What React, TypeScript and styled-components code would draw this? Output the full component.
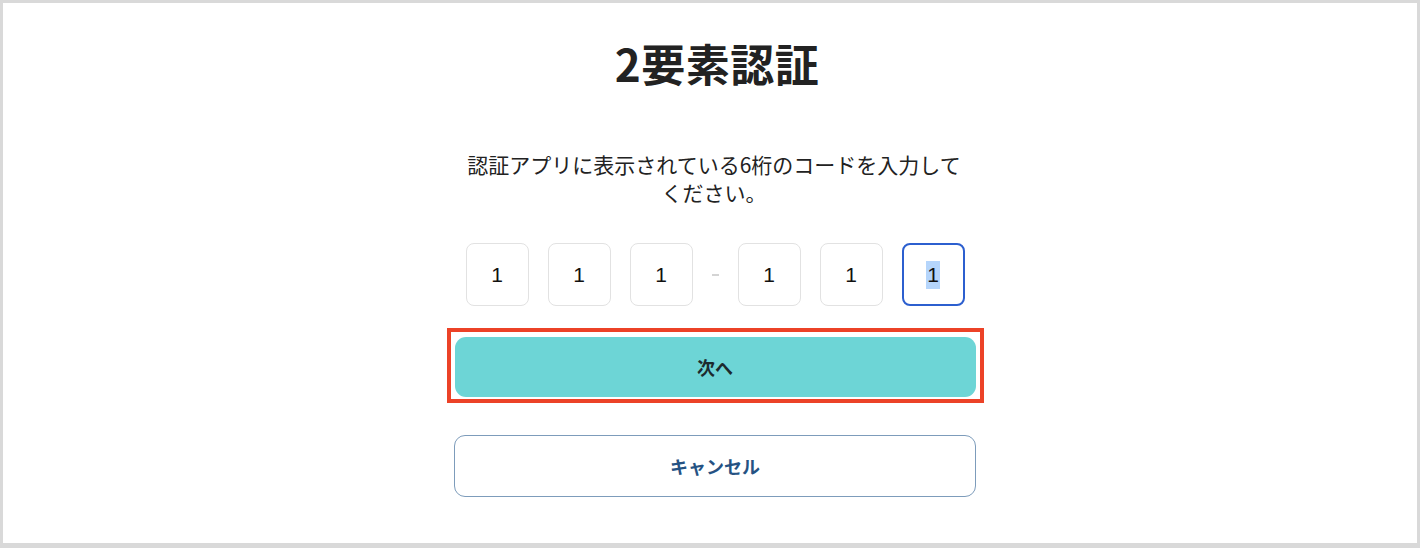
import React from "react";
import styled, { createGlobalStyle } from "styled-components";

const Global = createGlobalStyle`
  html, body { margin: 0; padding: 0; background: #ffffff; }
  body { font-family: "Noto Sans CJK JP", "Noto Sans", sans-serif; color: #222222; }
  * { box-sizing: border-box; }
`;

const Frame = styled.div`
  width: 1420px;
  height: 548px;
  border: 3px solid #d9d9d9;
  border-bottom-width: 5px;
  background: #ffffff;
  display: flex;
  justify-content: center;
  padding-left: 10px;
  overflow: hidden;
`;

const Column = styled.main`
  width: 522px;
  display: flex;
  flex-direction: column;
  align-items: center;
  padding-top: 30px;
`;

const Title = styled.h1`
  margin: 0;
  padding-left: 4px;
  font-size: 44px;
  line-height: 60px;
  font-weight: 700;
  color: #222222;
  letter-spacing: 0.5px;
`;

const Lead = styled.p`
  margin: 57px 0 0;
  width: 512px;
  padding-right: 2px;
  font-size: 21px;
  line-height: 28px;
  text-align: center;
  color: #222222;
`;

const CodeRow = styled.div`
  margin-top: 37px;
  display: flex;
  align-items: center;
  gap: 19px;
`;

const Group = styled.div`
  display: flex;
  gap: 19px;
`;

const Digit = styled.div<{ $active?: boolean }>`
  width: 63px;
  height: 63px;
  border-radius: 8px;
  border: ${(p) => (p.$active ? "2.5px solid #2c5fcf" : "1px solid #e2e2e2")};
  display: flex;
  align-items: center;
  justify-content: center;
  font-family: "Liberation Sans", Arial, sans-serif;
  font-size: 21px;
  color: #111111;
`;

const Selected = styled.span`
  background: #b5d5fb;
  padding: 2px 1px;
`;

const Dash = styled.span`
  width: 7px;
  height: 2px;
  background: #d4d4d4;
`;

const Highlight = styled.div`
  margin-top: 22px;
  width: 537px;
  border: 4.5px solid #ec4227;
  padding: 5px 4px 2px 4px;
`;

const PrimaryButton = styled.button`
  width: 521px;
  height: 60px;
  border: none;
  border-radius: 11px;
  background: #6dd5d6;
  font-family: "Noto Sans CJK JP", sans-serif;
  font-size: 18px;
  font-weight: 700;
  color: #1c2a2e;
  display: block;
`;

const SecondaryButton = styled.button`
  margin-top: 32px;
  width: 522px;
  height: 62px;
  border: 1px solid #7d9cbb;
  border-radius: 11px;
  background: #ffffff;
  font-family: "Noto Sans CJK JP", sans-serif;
  font-size: 18px;
  font-weight: 700;
  color: #255283;
`;

export default function App() {
  return (
    <>
      <Global />
      <Frame>
        <Column>
          <Title>2要素認証</Title>
          <Lead>認証アプリに表示されている6桁のコードを入力してください。</Lead>
          <CodeRow>
            <Group>
              <Digit>1</Digit>
              <Digit>1</Digit>
              <Digit>1</Digit>
            </Group>
            <Dash />
            <Group>
              <Digit>1</Digit>
              <Digit>1</Digit>
              <Digit $active>
                <Selected>1</Selected>
              </Digit>
            </Group>
          </CodeRow>
          <Highlight>
            <PrimaryButton>次へ</PrimaryButton>
          </Highlight>
          <SecondaryButton>キャンセル</SecondaryButton>
        </Column>
      </Frame>
    </>
  );
}
